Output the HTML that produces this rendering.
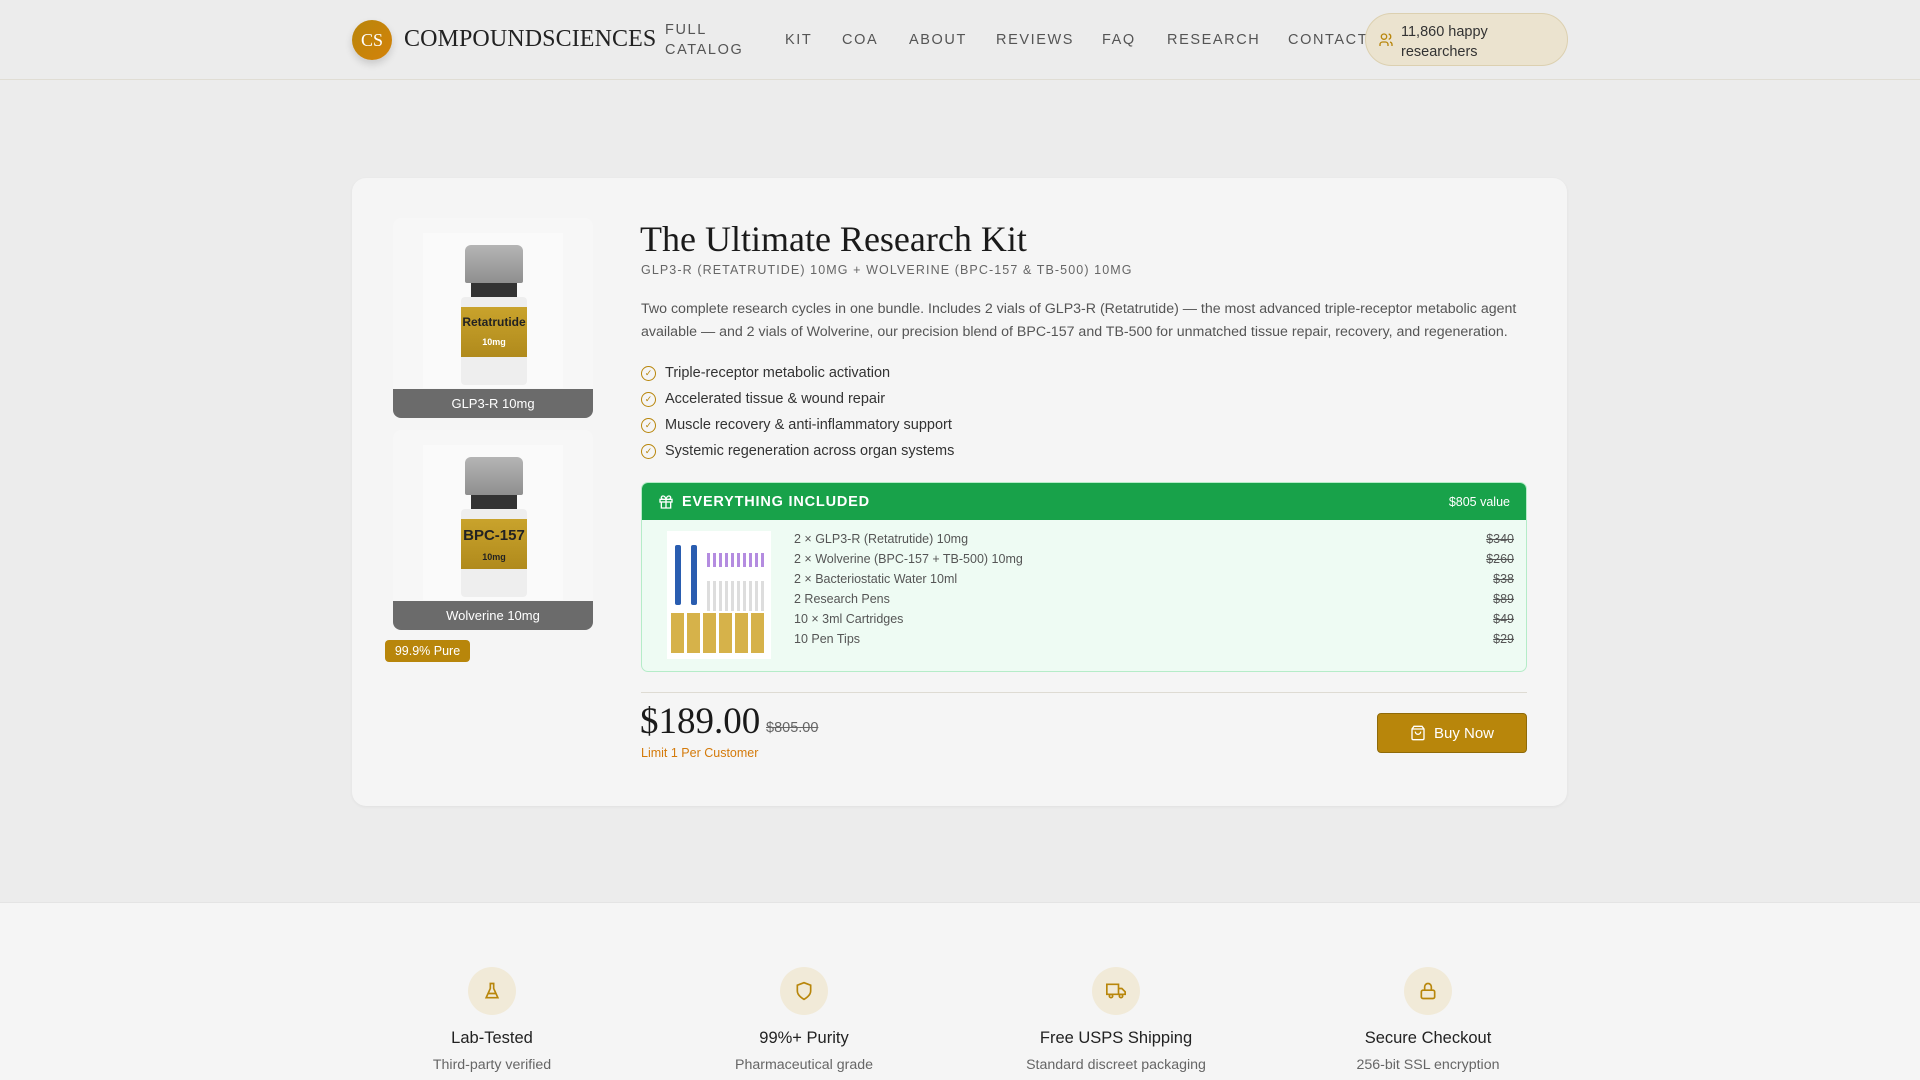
<!DOCTYPE html>
<html><head><meta charset="utf-8"><style>
*{box-sizing:border-box;margin:0;padding:0}
body{width:1920px;height:1080px;overflow:hidden;background:#ececec;font-family:"Liberation Sans",sans-serif;color:#333;position:relative}
.abs{position:absolute}
header{position:absolute;left:0;top:0;width:1920px;height:80px;border-bottom:1px solid #e0ddd4;background:#ececec}
.logo{left:352px;top:20px;width:40px;height:40px;border-radius:50%;background:linear-gradient(135deg,#b8860b,#d4820a);color:#fff;font-family:"Liberation Serif",serif;font-size:18px;display:flex;align-items:center;justify-content:center;box-shadow:0 4px 8px rgba(0,0,0,.15)}
.brand{left:404px;top:26px;font-family:"Liberation Serif",serif;font-size:24px;color:#222;letter-spacing:.1px}
.nav{font-size:14.5px;letter-spacing:1.6px;color:#555;top:32px}
.pill{left:1365px;top:13px;width:203px;height:53px;border-radius:27px;background:#ebe3cf;border:1px solid #dcd0b0;font-size:14.5px;color:#333;padding:8px 0 0 35px;line-height:20px}
.card{left:352px;top:178px;width:1215px;height:628px;background:#f5f5f5;border-radius:14px;box-shadow:0 1px 3px rgba(0,0,0,.05)}
.thumb{width:200px;height:200px;background:#f7f7f7;border-radius:8px;overflow:hidden}
.thumb .lbl{position:absolute;left:0;bottom:0;width:100%;height:29px;background:#6b6b6b;color:#fff;font-size:13px;text-align:center;line-height:29px}
.vial{position:absolute;left:30px;top:15px;width:140px;height:155px;background:#fafafa}
.cap{position:absolute;left:42px;top:12px;width:58px;height:38px;background:linear-gradient(#b5b5b5,#8f8f8f);border-radius:6px 6px 2px 2px}
.neck{position:absolute;left:48px;top:50px;width:46px;height:14px;background:#333}
.body{position:absolute;left:38px;top:64px;width:66px;height:88px;background:#eee;border-radius:4px}
.band{position:absolute;left:38px;top:74px;width:66px;height:50px;background:linear-gradient(#c9a32c,#b08a1c);color:#222;font-weight:bold;font-size:12px;text-align:center;padding-top:8px}
.band i{display:block;font-style:normal;color:#fff;font-size:9px;margin-top:8px}
.title{left:640px;top:218px;font-family:"Liberation Serif",serif;font-size:36px;color:#1a1a1a}
.sub{left:641px;top:263px;font-size:12.5px;letter-spacing:1.1px;color:#666}
.para{left:641px;top:298px;width:890px;font-size:14.2px;line-height:23px;color:#555}
.bul{left:641px;font-size:14.5px;color:#333;display:flex;align-items:center}
.bul span{width:15px;height:15px;border:1.5px solid #b8860b;border-radius:50%;margin-right:9px;display:inline-flex;align-items:center;justify-content:center;font-size:9px;color:#b8860b}
.box{left:641px;top:482px;width:886px;height:190px;border:1px solid #b5ecc8;border-radius:7px;background:#eefbf3;overflow:hidden}
.bh{height:37px;background:#18a24a;color:#fff;display:flex;align-items:center;padding:0 16px}
.row{position:absolute;left:152px;right:12px;font-size:12.5px;color:#555;display:flex;justify-content:space-between}
.feat{text-align:center;width:300px}
.ic{width:48px;height:48px;border-radius:50%;background:#f1ead8;margin:0 auto;display:flex;align-items:center;justify-content:center}
.ft{font-size:16.5px;color:#222;margin-top:14px}
.fs{font-size:14.2px;color:#666;margin-top:9px}
</style></head><body>
<header>
<div class="abs logo">CS</div>
<div class="abs brand">COMPOUNDSCIENCES</div>
<div class="abs nav" style="left:665px;top:20px;line-height:20px">FULL<br>CATALOG</div>
<div class="abs nav" style="left:785px">KIT</div>
<div class="abs nav" style="left:842px">COA</div>
<div class="abs nav" style="left:909px">ABOUT</div>
<div class="abs nav" style="left:996px">REVIEWS</div>
<div class="abs nav" style="left:1102px">FAQ</div>
<div class="abs nav" style="left:1167px">RESEARCH</div>
<div class="abs nav" style="left:1288px">CONTACT</div>
<div class="abs pill"><svg class="abs" style="left:12px;top:18px" width="16" height="16" viewBox="0 0 24 24" fill="none" stroke="#b8860b" stroke-width="2"><circle cx="9" cy="7" r="4"/><path d="M3 21v-2a4 4 0 014-4h4a4 4 0 014 4v2M16 3.1a4 4 0 010 7.8M21 21v-2a4 4 0 00-3-3.9"/></svg>11,860 happy<br>researchers</div>
</header>
<div class="abs card"></div>
<div class="abs thumb" style="left:393px;top:218px"><div class="vial"><div class="cap"></div><div class="neck"></div><div class="body"></div><div class="band">Retatrutide<i>10mg</i></div></div><div class="lbl">GLP3-R 10mg</div></div>
<div class="abs thumb" style="left:393px;top:430px"><div class="vial"><div class="cap"></div><div class="neck"></div><div class="body"></div><div class="band" style="font-size:15px">BPC-157<i style="color:#222">10mg</i></div></div><div class="lbl">Wolverine 10mg</div></div>
<div class="abs" style="left:385px;top:640px;width:85px;height:22px;background:#b8860b;color:#fff;font-size:12.5px;border-radius:4px;text-align:center;line-height:22px">99.9% Pure</div>
<div class="abs title">The Ultimate Research Kit</div>
<div class="abs sub">GLP3-R (RETATRUTIDE) 10MG + WOLVERINE (BPC-157 &amp; TB-500) 10MG</div>
<div class="abs para">Two complete research cycles in one bundle. Includes 2 vials of GLP3-R (Retatrutide) — the most advanced triple-receptor metabolic agent available — and 2 vials of Wolverine, our precision blend of BPC-157 and TB-500 for unmatched tissue repair, recovery, and regeneration.</div>
<div class="abs bul" style="top:365px"><span>✓</span>Triple-receptor metabolic activation</div>
<div class="abs bul" style="top:391px"><span>✓</span>Accelerated tissue &amp; wound repair</div>
<div class="abs bul" style="top:417px"><span>✓</span>Muscle recovery &amp; anti-inflammatory support</div>
<div class="abs bul" style="top:443px"><span>✓</span>Systemic regeneration across organ systems</div>
<div class="abs box">
<div class="bh"><svg width="16" height="16" viewBox="0 0 24 24" fill="none" stroke="#fff" stroke-width="2"><rect x="3" y="8" width="18" height="4"/><path d="M12 8v13M19 12v9H5v-9M7.5 8a2.5 2.5 0 010-5C11 3 12 8 12 8s1-5 4.5-5a2.5 2.5 0 010 5"/></svg><b style="margin-left:8px;font-size:14.5px;letter-spacing:.8px">EVERYTHING INCLUDED</b><span style="margin-left:auto;font-size:12.5px">$805 value</span></div>
<div class="abs" style="left:25px;top:48px;width:104px;height:128px;background:#fff">
<div class="abs" style="left:8px;top:14px;width:6px;height:60px;background:#2a5db0;border-radius:2px"></div>
<div class="abs" style="left:24px;top:14px;width:6px;height:60px;background:#2a5db0;border-radius:2px"></div>
<div class="abs" style="left:40px;top:50px;width:58px;height:30px;background:repeating-linear-gradient(90deg,#ddd 0 3px,#fff 3px 6px)"></div>
<div class="abs" style="left:40px;top:22px;width:58px;height:14px;background:repeating-linear-gradient(90deg,#b48ce0 0 3px,#fff 3px 6px)"></div>
<div class="abs" style="left:4px;top:82px;width:96px;height:40px;background:repeating-linear-gradient(90deg,#d6b24a 0 13px,#fff 13px 16px)"></div>
</div>
<div class="row" style="top:49px"><span>2 × GLP3-R (Retatrutide) 10mg</span><s>$340</s></div>
<div class="row" style="top:69px"><span>2 × Wolverine (BPC-157 + TB-500) 10mg</span><s>$260</s></div>
<div class="row" style="top:89px"><span>2 × Bacteriostatic Water 10ml</span><s>$38</s></div>
<div class="row" style="top:109px"><span>2 Research Pens</span><s>$89</s></div>
<div class="row" style="top:129px"><span>10 × 3ml Cartridges</span><s>$49</s></div>
<div class="row" style="top:149px"><span>10 Pen Tips</span><s>$29</s></div>
</div>
<div class="abs" style="left:641px;top:692px;width:886px;height:1px;background:#dedbd3"></div>
<div class="abs" style="left:640px;top:700px;font-family:'Liberation Serif',serif;font-size:37px;color:#1a1a1a">$189.00</div>
<div class="abs" style="left:766px;top:720px;font-size:14.5px;color:#666"><s>$805.00</s></div>
<div class="abs" style="left:641px;top:746px;font-size:12.5px;color:#d47a0a">Limit 1 Per Customer</div>
<div class="abs" style="left:1377px;top:713px;width:150px;height:40px;background:#b8860b;border:1px solid #8f6a08;border-radius:4px;color:#fff;font-size:15px;display:flex;align-items:center;justify-content:center"><svg width="16" height="16" viewBox="0 0 24 24" fill="none" stroke="#fff" stroke-width="2" style="margin-right:8px"><path d="M6 2L3 6v14a2 2 0 002 2h14a2 2 0 002-2V6l-3-4zM3 6h18M16 10a4 4 0 01-8 0"/></svg>Buy Now</div>
<div class="abs" style="left:0;top:902px;width:1920px;height:178px;background:#f5f5f5;border-top:1px solid #e4e4e4"></div>
<div class="abs feat" style="left:342px;top:967px"><div class="ic"><svg width="20" height="20" viewBox="0 0 24 24" fill="none" stroke="#b8860b" stroke-width="2"><path d="M9 3h6M10 3v6l-5 11h14L14 9V3M7 15h10"/></svg></div><div class="ft">Lab-Tested</div><div class="fs">Third-party verified</div></div>
<div class="abs feat" style="left:654px;top:967px"><div class="ic"><svg width="20" height="20" viewBox="0 0 24 24" fill="none" stroke="#b8860b" stroke-width="2"><path d="M12 22s8-4 8-10V5l-8-3-8 3v7c0 6 8 10 8 10z"/></svg></div><div class="ft">99%+ Purity</div><div class="fs">Pharmaceutical grade</div></div>
<div class="abs feat" style="left:966px;top:967px"><div class="ic"><svg width="20" height="20" viewBox="0 0 24 24" fill="none" stroke="#b8860b" stroke-width="2"><path d="M1 4h14v12H1zM15 9h4l4 4v3h-8"/><circle cx="6" cy="18" r="2"/><circle cx="18" cy="18" r="2"/></svg></div><div class="ft">Free USPS Shipping</div><div class="fs">Standard discreet packaging</div></div>
<div class="abs feat" style="left:1278px;top:967px"><div class="ic"><svg width="20" height="20" viewBox="0 0 24 24" fill="none" stroke="#b8860b" stroke-width="2"><rect x="4" y="11" width="16" height="10" rx="2"/><path d="M8 11V7a4 4 0 018 0v4"/></svg></div><div class="ft">Secure Checkout</div><div class="fs">256-bit SSL encryption</div></div>
</body></html>
